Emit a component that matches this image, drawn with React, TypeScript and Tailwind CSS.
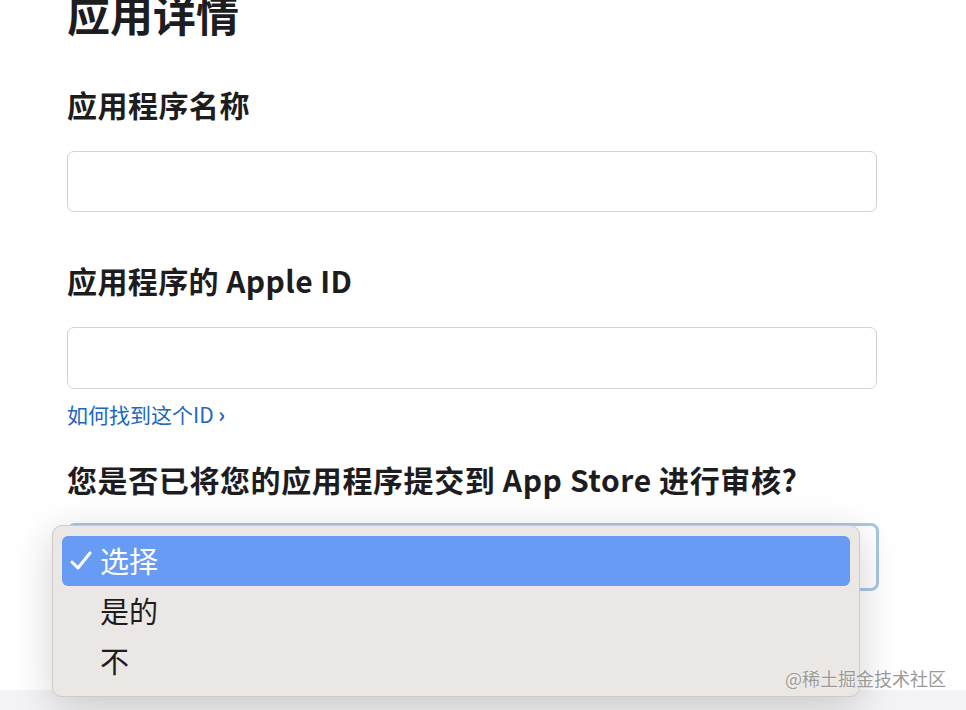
const font = "font-['Noto_Sans_CJK_SC','Noto_Sans',sans-serif]";

function Field({ label }: { label: string }) {
  return (
    <>
      <h2 className="mt-[49px] text-[30px] leading-[36px] font-semibold tracking-[0.5px] text-[#1d1d1f]">{label}</h2>
      <div className="mt-[29px] h-[61px] w-full rounded-[7px] border border-[#d2d2d7] bg-white" />
    </>
  );
}

const options = ["选择", "是的", "不"];

export default function App() {
  return (
    <div className={`${font} relative h-[710px] w-[966px] overflow-hidden bg-white`}>
      <div className="relative ml-[67px] w-[810px]">
        <h1 className="mt-[-11px] text-[43px] leading-[48px] font-bold text-[#1d1d1f]">应用详情</h1>

        <Field label="应用程序名称" />

        <h2 className="mt-[50px] text-[30px] leading-[36px] font-semibold tracking-[0.4px] text-[#1d1d1f]">
          应用程序的 Apple ID
        </h2>
        <div className="mt-[29px] h-[62px] w-full rounded-[7px] border border-[#d2d2d7] bg-white" />
        <a className="mt-[11px] block text-[21px] leading-[28px] text-[#2166c2]">
          如何找到这个ID <span className="font-bold">›</span>
        </a>

        <h2 className="mt-[33px] text-[30px] leading-[36px] font-semibold tracking-[0.6px] text-[#1d1d1f]">
          您是否已将您的应用程序提交到 App Store 进行审核?
        </h2>

        <div className="relative mt-[26px]">
          <div className="h-[68px] w-[812px] rounded-[8px] border-[3px] border-[#a9c6e6] bg-white" />

          {/* open dropdown menu */}
          <div className="absolute top-[2px] left-[-15px] z-10 w-[808px] rounded-[10px] border border-[#cfcac7] bg-[#ebe7e4] px-[9px] py-[10px] shadow-[0_10px_40px_rgba(0,0,0,0.18)]">
            {options.map((o, i) => (
              <div
                key={o}
                className={`flex h-[50px] items-center rounded-[6px] text-[29px] ${
                  i === 0 ? "bg-[#689cf4] text-white" : "text-[#1d1d1f]"
                }`}
              >
                <span className="flex w-[38px] pl-[8px]">
                  {i === 0 && (
                    <svg viewBox="0 0 22 20" className="h-[20px] w-[22px]" fill="none" stroke="currentColor" strokeWidth="3" strokeLinecap="round" strokeLinejoin="round">
                      <path d="M2 11l6 6L20 2" />
                    </svg>
                  )}
                </span>
                <span>{o}</span>
              </div>
            ))}
          </div>
        </div>
      </div>

      <div className="absolute bottom-0 left-0 h-[20px] w-full bg-[#f3f3f5]" />
      <div className="absolute top-[666px] left-[785px] z-20 text-[18px] leading-[24px] text-[#9a9a9a] [text-shadow:0_0_2px_#fff]">
        @稀土掘金技术社区
      </div>
    </div>
  );
}
